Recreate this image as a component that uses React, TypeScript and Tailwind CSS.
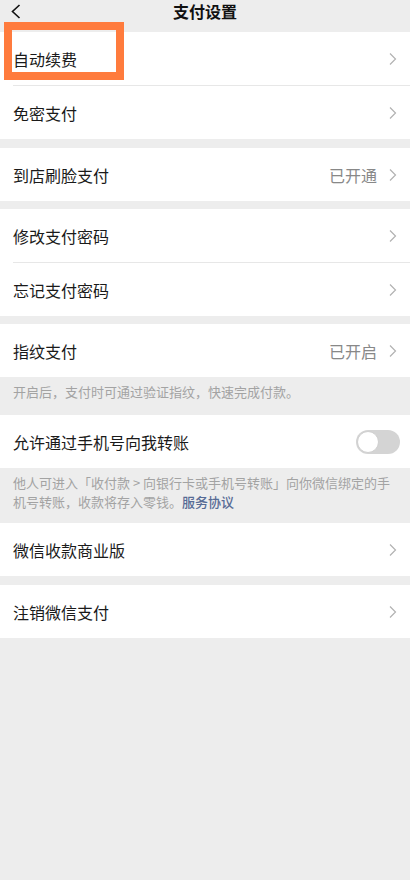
const font = "font-['Noto_Sans_CJK_SC','Noto_Sans',sans-serif]";

const Chevron = () => (
  <svg width="8" height="14" viewBox="0 0 8 14" className="shrink-0">
    <polyline points="1,1.5 6.5,7 1,12.5" fill="none" stroke="#b2b2b2" strokeWidth="1.2" />
  </svg>
);

const Row = ({ title, value }: { title: string; value?: string }) => (
  <div className="flex h-[53px] items-center justify-between px-[13px]">
    <span className="text-[16px] text-[#1a1a1a]">{title}</span>
    <div className="flex items-center gap-[12px]">
      {value && <span className="text-[16px] text-[#888888]">{value}</span>}
      <Chevron />
    </div>
  </div>
);

const Divider = () => <div className="ml-[13px] h-px bg-[#e7e7e7]" />;

export default function App() {
  return (
    <div className={`relative min-h-[880px] bg-[#ededed] ${font}`}>
      <header className="relative flex h-[32px] justify-center">
        <svg width="10" height="15" viewBox="0 0 10 15" className="absolute left-[11px] top-[4px]">
          <polyline points="8.5,1 1.5,7.5 8.5,14" fill="none" stroke="#111" strokeWidth="1.6" />
        </svg>
        <h1 className="text-[16px] font-bold leading-[22px] text-[#111]">支付设置</h1>
      </header>

      <div className="bg-white">
        <Row title="自动续费" />
        <Divider />
        <Row title="免密支付" />
      </div>

      <div className="mt-[9px] bg-white">
        <Row title="到店刷脸支付" value="已开通" />
      </div>

      <div className="mt-[8px] bg-white">
        <Row title="修改支付密码" />
        <Divider />
        <Row title="忘记支付密码" />
      </div>

      <div className="mt-[8px] bg-white">
        <Row title="指纹支付" value="已开启" />
      </div>
      <p className="px-[13px] pb-[14px] pt-[5px] text-[13px] leading-[19px] text-[#a3a3a3]">
        开启后，支付时可通过验证指纹，快速完成付款。
      </p>

      <div className="flex h-[53px] items-center justify-between bg-white pl-[13px] pr-[10px]">
        <span className="text-[16px] text-[#1a1a1a]">允许通过手机号向我转账</span>
        <div className="relative h-[24px] w-[44px] rounded-full bg-[#d4d4d4]">
          <div className="absolute left-[1px] top-[1px] h-[22px] w-[22px] rounded-full border border-[#cfcfcf] bg-white" />
        </div>
      </div>
      <div className="px-[13px] pb-[12px] pt-[5px] text-[13px] leading-[19px] text-[#a3a3a3]">
        <div className="whitespace-nowrap">他人可进入「收付款 &gt; 向银行卡或手机号转账」向你微信绑定的手</div>
        <div className="flex">
          <span>机号转账，收款将存入零钱。</span>
          <span className="font-medium text-[#576b95]">服务协议</span>
        </div>
      </div>

      <div className="bg-white">
        <Row title="微信收款商业版" />
      </div>

      <div className="mt-[9px] bg-white">
        <Row title="注销微信支付" />
      </div>

      <div className="absolute left-[4px] top-[22px] h-[58px] w-[120px] border-[8px] border-[#ff7b3d]" />
    </div>
  );
}
